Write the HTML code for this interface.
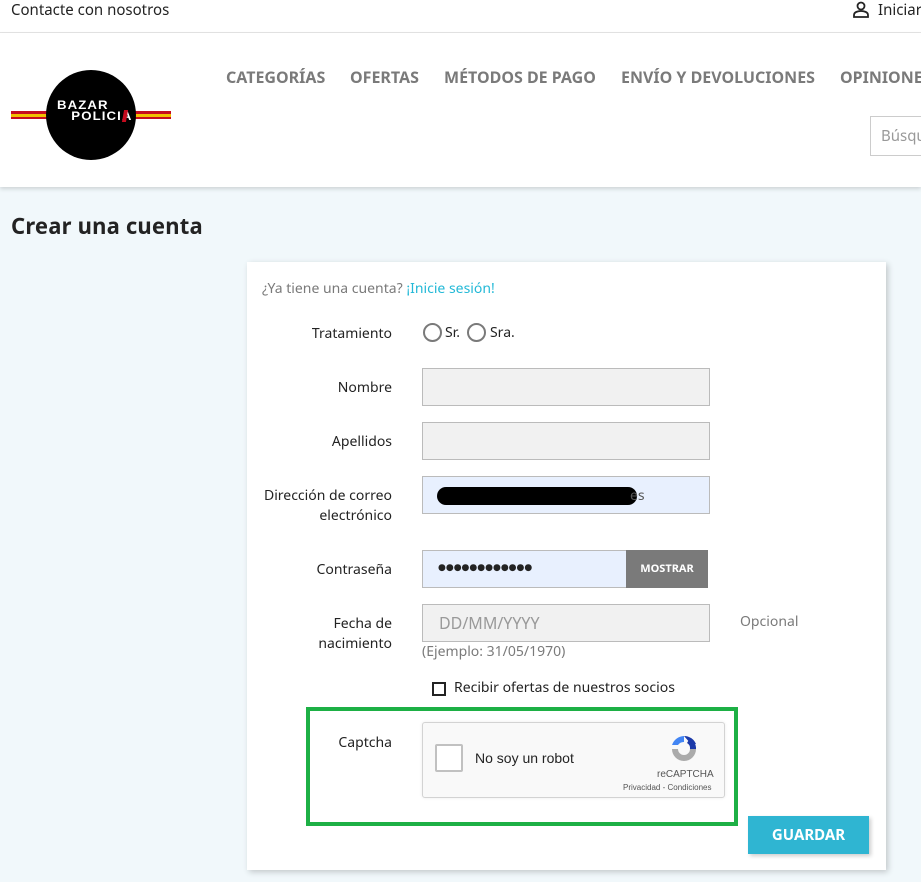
<!DOCTYPE html>
<html><head><meta charset="utf-8"><style>
*{box-sizing:border-box;margin:0;padding:0}
body{width:921px;height:882px;overflow:hidden;background:#f1f8fb;font-family:"Noto Sans","DejaVu Sans","Liberation Sans",sans-serif;color:#232323;position:relative;font-size:14px}
.abs{position:absolute}
.top{left:0;top:0;width:921px;height:33px;background:#fff;border-bottom:1px solid #e5e5e5}
.hdr{left:0;top:33px;width:921px;height:154px;background:#fff;box-shadow:0 2px 4px rgba(0,0,0,.15)}
.nav{font-size:16px;font-weight:bold;color:#7a7a7a;top:66px}
.card{left:247px;top:262px;width:639px;height:608px;background:#fff;box-shadow:2px 2px 6px rgba(0,0,0,.2)}
.lbl{font-size:14px;color:#232323;text-align:right;width:200px;left:192px;line-height:20px}
.inp{left:422px;width:288px;height:38px;background:#f1f1f1;border:1px solid #bbb}
</style></head><body>
<div class="abs top"></div>
<div class="abs" style="left:11px;top:0;font-size:15px;line-height:20px">Contacte con nosotros</div>
<svg class="abs" style="left:852px;top:0" width="18" height="18" viewBox="0 0 18 18"><circle cx="9" cy="6" r="3.5" fill="none" stroke="#232323" stroke-width="1.8"/><path d="M2 17v-2c0-3 4-4 7-4s7 1 7 4v2z" fill="none" stroke="#232323" stroke-width="1.8"/></svg>
<div class="abs" style="left:878px;top:0;font-size:15px;line-height:20px">Iniciar</div>
<div class="abs hdr"></div>
<div class="abs" style="left:11px;top:111px;width:160px;height:3px;background:#c60b1e"></div>
<div class="abs" style="left:11px;top:114px;width:160px;height:3px;background:#f1bf00"></div>
<div class="abs" style="left:11px;top:117px;width:160px;height:2px;background:#c60b1e"></div>
<div class="abs" style="left:46px;top:70px;width:90px;height:90px;border-radius:50%;background:#000"></div>
<div class="abs" style="left:57px;top:100px;color:#fff;font:bold 12px 'Liberation Sans',sans-serif;letter-spacing:1px;line-height:11px;transform:scaleX(1.1);transform-origin:left">BAZAR<br>&nbsp;&nbsp;&nbsp;POLICIA</div>
<div class="abs" style="left:123px;top:110px;width:4px;height:12px;background:#c60b1e;transform:skewX(-10deg)"></div>
<div class="abs nav" style="left:226px">CATEGORÍAS</div>
<div class="abs nav" style="left:350px">OFERTAS</div>
<div class="abs nav" style="left:444px">MÉTODOS DE PAGO</div>
<div class="abs nav" style="left:621px">ENVÍO Y DEVOLUCIONES</div>
<div class="abs nav" style="left:840px">OPINIONES</div>
<div class="abs" style="left:870px;top:116px;width:60px;height:40px;border:1px solid #ccc;background:#fff;color:#999;font-size:15px;padding:9px 10px">Búsqueda</div>
<div class="abs" style="left:11px;top:211px;font-size:22px;font-weight:bold;letter-spacing:0.2px">Crear una cuenta</div>
<div class="abs card"></div>
<div class="abs" style="left:262px;top:279px;font-size:14px;color:#7a7a7a">¿Ya tiene una cuenta? <span style="color:#24b9d7">¡Inicie sesión!</span></div>
<div class="abs lbl" style="top:324px">Tratamiento</div>
<div class="abs" style="left:423px;top:323px;width:19px;height:19px;border:2px solid #7a7a7a;border-radius:50%"></div>
<div class="abs" style="left:445px;top:323px;font-size:14px">Sr.</div>
<div class="abs" style="left:467px;top:323px;width:19px;height:19px;border:2px solid #7a7a7a;border-radius:50%"></div>
<div class="abs" style="left:490px;top:323px;font-size:14px">Sra.</div>
<div class="abs lbl" style="top:378px">Nombre</div>
<div class="abs inp" style="top:368px"></div>
<div class="abs lbl" style="top:432px">Apellidos</div>
<div class="abs inp" style="top:422px"></div>
<div class="abs lbl" style="top:486px">Dirección de correo electrónico</div>
<div class="abs inp" style="top:476px;background:#e8f0fe"></div>
<div class="abs" style="left:437px;top:487px;width:200px;height:18px;background:#000;border-radius:9px"></div>
<div class="abs" style="left:630px;top:486px;color:#555;font-size:14px">es</div>
<div class="abs lbl" style="top:560px">Contraseña</div>
<div class="abs inp" style="top:550px;width:205px;background:#e8f0fe"></div>
<div class="abs" style="left:438px;top:560px;font-size:9px;letter-spacing:0px">●●●●●●●●●●●●</div>
<div class="abs" style="left:626px;top:550px;width:82px;height:38px;background:#7a7a7a;color:#fff;font-size:11px;font-weight:bold;text-align:center;line-height:38px">MOSTRAR</div>
<div class="abs lbl" style="top:614px">Fecha de<br>nacimiento</div>
<div class="abs inp" style="top:604px;color:#999;font-size:16px;padding:7px 16px">DD/MM/YYYY</div>
<div class="abs" style="left:740px;top:612px;color:#7a7a7a;font-size:14px">Opcional</div>
<div class="abs" style="left:422px;top:642px;color:#7a7a7a;font-size:14px">(Ejemplo: 31/05/1970)</div>
<div class="abs" style="left:432px;top:682px;width:14px;height:14px;border:2px solid #232323"></div>
<div class="abs" style="left:454px;top:678px;font-size:14px">Recibir ofertas de nuestros socios</div>
<div class="abs" style="left:306px;top:707px;width:432px;height:119px;border:4px solid #1db045"></div>
<div class="abs lbl" style="top:733px">Captcha</div>
<div class="abs" style="left:422px;top:722px;width:303px;height:76px;background:#f9f9f9;border:1px solid #d3d3d3;border-radius:3px;box-shadow:0 0 3px rgba(0,0,0,.08)"></div>
<div class="abs" style="left:435px;top:744px;width:28px;height:28px;background:#fff;border:2px solid #c1c1c1;border-radius:2px"></div>
<div class="abs" style="left:475px;top:750px;font:14px 'Liberation Sans',sans-serif">No soy un robot</div>
<svg class="abs" style="left:668px;top:733px" width="32" height="32" viewBox="0 0 32 32"><path d="M16 3a13 13 0 0 1 12 8l-5 0z" fill="#1c3aa9"/><path d="M16 3a13 13 0 0 0-12 9h6a7 7 0 0 1 6-3z" fill="#4285f4"/><path d="M4 16a12 12 0 0 0 24 0h-6a6 6 0 0 1-12 0z" fill="#ababab"/><path d="M28 16a12 12 0 0 0-6-11l-3 5a6 6 0 0 1 3 6z" fill="#1c3aa9"/></svg>
<div class="abs" style="left:657px;top:769px;font:10px 'Liberation Sans',sans-serif;color:#555">reCAPTCHA</div>
<div class="abs" style="left:623px;top:783px;font:8px 'Liberation Sans',sans-serif;color:#555">Privacidad - Condiciones</div>
<div class="abs" style="left:748px;top:816px;width:121px;height:38px;background:#2fb5d2;color:#fff;font-weight:bold;font-size:15px;text-align:center;line-height:38px;box-shadow:2px 2px 4px rgba(0,0,0,.2)">GUARDAR</div>
</body></html>
